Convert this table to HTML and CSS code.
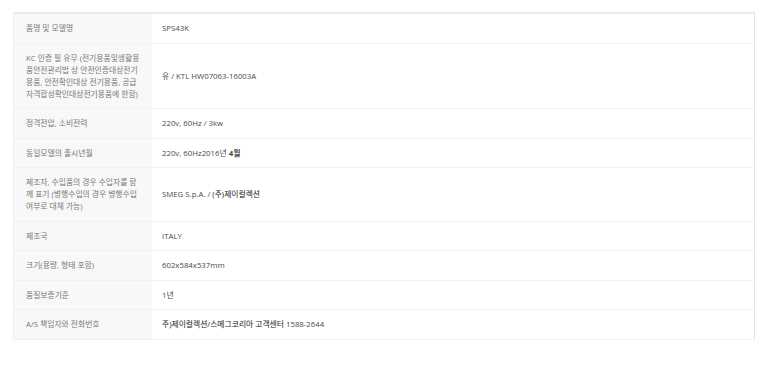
FILE: index.html
```html
<!DOCTYPE html>
<html lang="ko">
<head>
<meta charset="utf-8">
<link rel="stylesheet" href="styles.css">
</head>
<body>
<table class="spec">
  <tbody>
    <tr><th>품명 및 모델명</th><td>SPS43K</td></tr>
    <tr><th>KC 인증 필 유무 (전기용품및생활용<br>품안전관리법 상 안전인증대상전기<br>용품, 안전확인대상 전기용품, 공급<br>자격합성확인대상전기용품에 한함)</th><td>유 / KTL HW07063-16003A</td></tr>
    <tr><th>정격전압, 소비전력</th><td>220v, 60Hz / 3kw</td></tr>
    <tr><th>동일모델의 출시년월</th><td>220v, 60Hz2016년 <b class="strong">4월</b></td></tr>
    <tr><th>제조자, 수입품의 경우 수입자를 함<br>께 표기 (병행수입의 경우 병행수입<br>여부로 대체 가능)</th><td>SMEG S.p.A. / <b class="medium">(주)제이컬렉션</b></td></tr>
    <tr><th>제조국</th><td>ITALY</td></tr>
    <tr><th>크기(용량, 형태 포함)</th><td>602x584x537mm</td></tr>
    <tr><th>품질보증기준</th><td>1년</td></tr>
    <tr><th>A/S 책임자와 전화번호</th><td><b class="medium">주)제이컬렉션/스메그코리아 고객센터</b> 1588-2644</td></tr>
  </tbody>
</table>
</body>
</html>
```

FILE: styles.css
```css
html, body {
  margin: 0;
  padding: 0;
  background: #ffffff;
}
body {
  padding: 12px 0 0 13px;
  font-family: "Open Sans", "Noto Sans CJK KR", sans-serif;
  font-size: 7.8px;
  line-height: 12px;
}
.spec {
  width: 742px;
  border-collapse: collapse;
  border-top: 2px solid #ebebeb;
  border-left: 1px solid #efefef;
  border-right: 1px solid #e3e3e3;
  border-bottom: 1px solid #e6e6e6;
}
.spec tr {
  border-bottom: 1px solid #f0f0f0;
}
.spec th {
  width: 114px;
  background: #f8f8f8;
  color: #777777;
  font-weight: normal;
  text-align: left;
  vertical-align: middle;
  padding: 8px 12px 8.5px 12px;
  white-space: nowrap;
}
.spec td {
  color: #4a4a4a;
  vertical-align: middle;
  padding: 8px 10px 8.5px 10px;
}
.strong {
  font-weight: 700;
  color: #444444;
}
.medium {
  font-weight: 400;
  color: #222222;
}
```
